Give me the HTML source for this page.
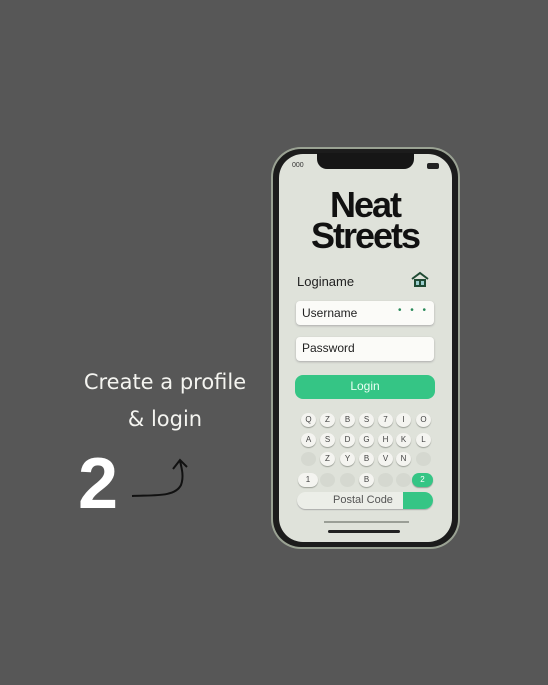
<html><head><style>
body{margin:0;width:548px;height:685px;background:#575757;position:relative;overflow:hidden;font-family:"Liberation Sans",sans-serif}
.a{position:absolute}
.k{position:absolute;width:15px;height:14px;border-radius:50%;background:#f4f4f0;box-shadow:0 1px 1px #9a9e96;font-size:8px;color:#444;text-align:center;line-height:14px}
.f{background:#d5d8d0;color:#c8ccc5;box-shadow:none}
</style></head><body>
<div class="a" style="left:70px;top:364px;width:190px;color:#f4f4f0;text-align:center;line-height:37px;font-family:'DejaVu Sans',sans-serif;font-size:21px">Create a profile<br>&amp; login</div>
<div class="a" style="left:78px;top:444px;color:#fff;font-size:72px;font-weight:bold;font-family:'Liberation Sans',sans-serif;line-height:80px">2</div>
<svg class="a" style="left:125px;top:455px" width="70" height="50"><path d="M7 41 C30 40 50 42 56 30 C59 22 57 14 55 6 M48 14 L55 5 L62 12" fill="none" stroke="#111" stroke-width="2"/></svg>
<div class="a" style="left:271px;top:147px;width:189px;height:402px;border-radius:30px;background:#9aa293"></div>
<div class="a" style="left:273px;top:149px;width:185px;height:398px;border-radius:28px;background:#1c1c1c"></div>
<div class="a" style="left:279px;top:154px;width:173px;height:388px;border-radius:24px;background:#dfe2da"></div>
<div class="a" style="left:317px;top:153px;width:97px;height:16px;border-radius:0 0 10px 10px;background:#161616"></div>
<div class="a" style="left:292px;top:162px;font-size:7px;color:#333">000</div>
<div class="a" style="left:427px;top:163px;width:12px;height:6px;background:#222;border-radius:2px"></div>
<div class="a" style="left:300px;top:189px;width:130px;text-align:center;font-family:'Liberation Sans',sans-serif;font-weight:bold;font-size:36px;line-height:31px;color:#111;letter-spacing:-2px">Neat<br>Streets</div>
<div class="a" style="left:297px;top:274px;font-size:13px;color:#222">Loginame</div>
<svg class="a" style="left:411px;top:271px" width="18" height="17"><path d="M1 8 L9 2 L17 8" fill="none" stroke="#1f4a33" stroke-width="2"/><rect x="3" y="8" width="12" height="8" fill="#1f4a33"/><rect x="5" y="10" width="3" height="4" fill="#9cc"/><rect x="10" y="10" width="3" height="4" fill="#9cc"/></svg>
<div class="a" style="left:296px;top:301px;width:138px;height:24px;border-radius:4px;background:#fbfbf8;box-shadow:0 1px 2px #aaa"></div>
<div class="a" style="left:302px;top:306px;font-size:12px;color:#222">Username</div>
<div class="a" style="left:398px;top:305px;font-size:10px;color:#2a8a5a;letter-spacing:3px">• • •</div>
<div class="a" style="left:296px;top:337px;width:138px;height:24px;border-radius:4px;background:#fbfbf8;box-shadow:0 1px 2px #aaa"></div>
<div class="a" style="left:302px;top:341px;font-size:12px;color:#222">Password</div>
<div class="a" style="left:295px;top:375px;width:140px;height:24px;border-radius:8px;background:#35c585;color:#eafff3;font-size:12px;text-align:center;line-height:23px">Login</div>
<div class="k" style="left:301px;top:413px">Q</div><div class="k" style="left:320px;top:413px">Z</div><div class="k" style="left:340px;top:413px">B</div><div class="k" style="left:359px;top:413px">S</div><div class="k" style="left:378px;top:413px">7</div><div class="k" style="left:396px;top:413px">I</div><div class="k" style="left:416px;top:413px">O</div>
<div class="k" style="left:301px;top:433px">A</div><div class="k" style="left:320px;top:433px">S</div><div class="k" style="left:340px;top:433px">D</div><div class="k" style="left:359px;top:433px">G</div><div class="k" style="left:378px;top:433px">H</div><div class="k" style="left:396px;top:433px">K</div><div class="k" style="left:416px;top:433px">L</div>
<div class="k f" style="left:301px;top:452px"></div><div class="k" style="left:320px;top:452px">Z</div><div class="k" style="left:340px;top:452px">Y</div><div class="k" style="left:359px;top:452px">B</div><div class="k" style="left:378px;top:452px">V</div><div class="k" style="left:396px;top:452px">N</div><div class="k f" style="left:416px;top:452px"></div>
<div class="k" style="left:298px;top:473px;width:20px;border-radius:8px">1</div><div class="k f" style="left:320px;top:473px"></div><div class="k f" style="left:340px;top:473px"></div><div class="k" style="left:359px;top:473px">B</div><div class="k f" style="left:378px;top:473px"></div><div class="k f" style="left:396px;top:473px"></div><div class="k" style="left:412px;top:473px;width:21px;border-radius:8px;background:#35c585;color:#fff">2</div>
<div class="a" style="left:297px;top:492px;width:136px;height:17px;border-radius:9px;background:#eceee8;box-shadow:0 1px 1px #aaa;overflow:hidden"><div style="position:absolute;right:0;top:0;width:30px;height:17px;background:#35c585"></div><div style="position:absolute;left:36px;top:2px;font-size:11px;color:#555">Postal Code</div></div>
<div class="a" style="left:324px;top:521px;width:85px;height:2px;background:#9a9e96"></div>
<div class="a" style="left:328px;top:530px;width:72px;height:3px;border-radius:2px;background:#222"></div>
</body></html>
